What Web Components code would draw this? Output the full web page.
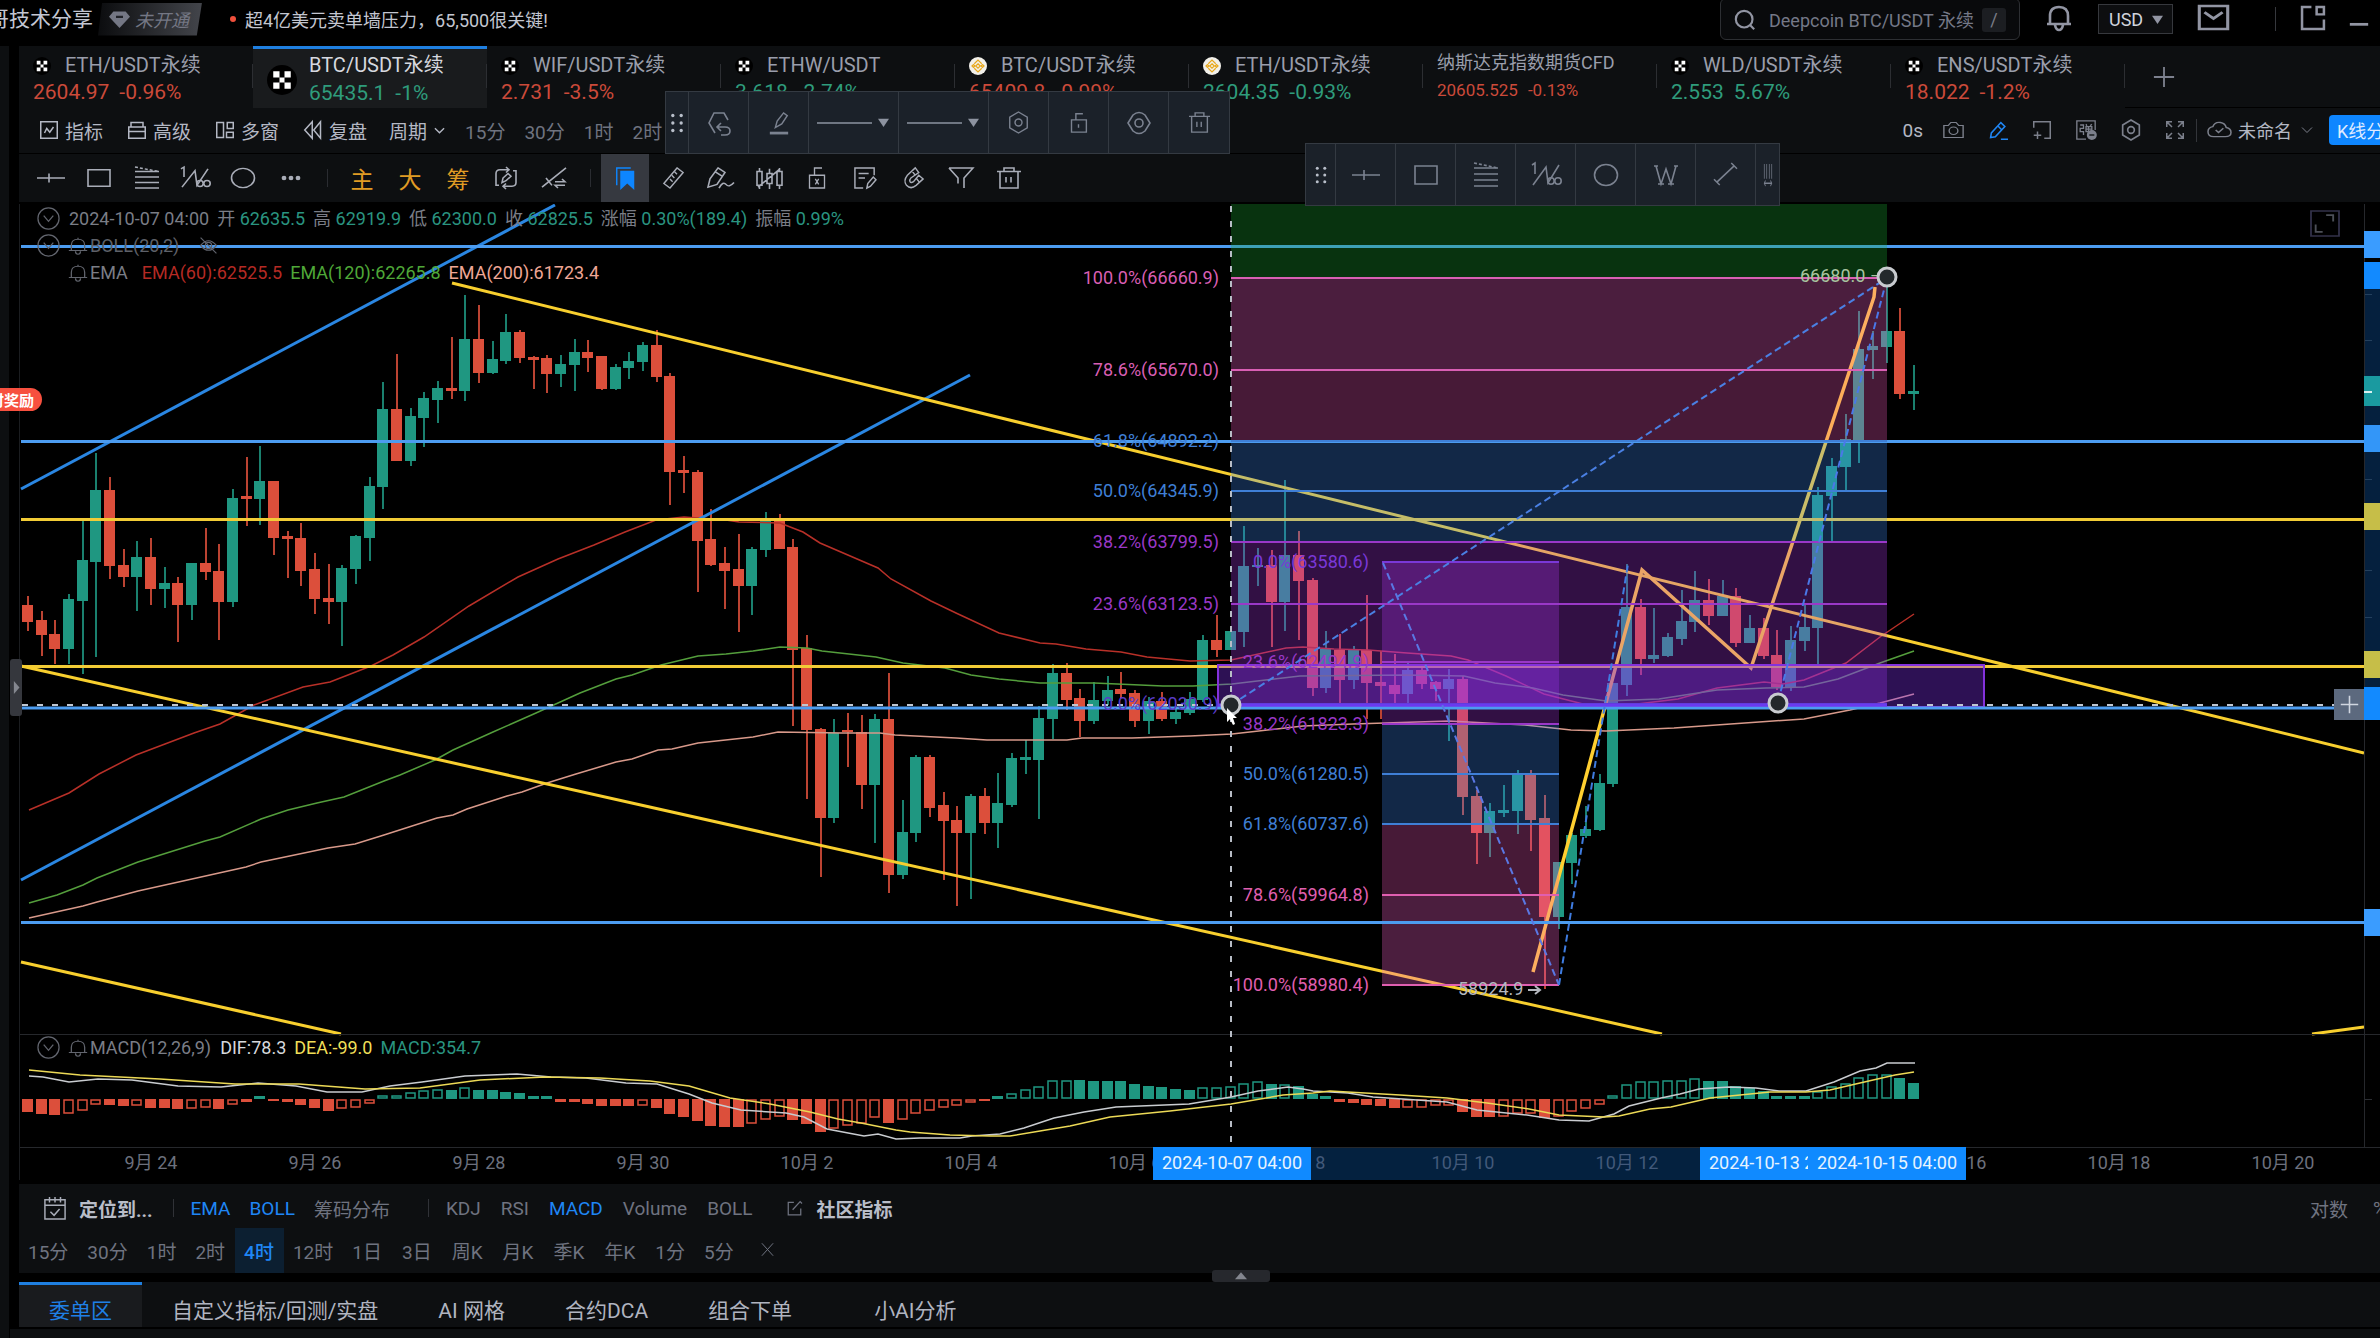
<!DOCTYPE html>
<html lang="zh-CN">
<head>
<meta charset="utf-8">
<title>BTC/USDT永续</title>
<style>
html,body{margin:0;background:#000;height:100%;overflow:hidden}
body{font-family:Roboto,"Noto Sans CJK SC",sans-serif;color:#a6abb8}
</style>
</head>
<body>
<app-shell></app-shell>
<script>
const RESET = `*{box-sizing:border-box}button{font:inherit;color:inherit;background:none;border:0;padding:0;margin:0;cursor:pointer;white-space:nowrap}a{color:inherit;text-decoration:none}`;
function define(name, render) {
  customElements.define(name, class extends HTMLElement {
    constructor() { super(); this.attachShadow({ mode: 'open' }); }
    connectedCallback() {
      const t = document.createElement('template');
      const [css, html] = render(this);
      t.innerHTML = `<style>${RESET}${css}</style>${html}`;
      this.shadowRoot.replaceChildren(t.content.cloneNode(true));
    }
  });
}

/* ---------- icons: 24 x 24 grid, stroked with the current colour ---------- */
const ICONS = {
  cross: '<path d="M-2 12H26M10 7V17"/>',
  rect: '<path d="M1 3H23V21H1Z"/>',
  fan: '<path d="M0 5H24M0 11H24M0 17H24M0 23H24"/><path stroke-dasharray="3 2" d="M0 0L24 5"/>',
  wave: '<path d="M-2 2L1 0V11M-1 22L12 4L14 20L25 2"/><circle cx="17" cy="18" r="3.2"/><circle cx="24" cy="18" r="3.2"/>',
  circle: '<ellipse cx="12" cy="12" rx="11.5" ry="10.5"/>',
  dots: '<g fill="currentColor" stroke="none"><circle cx="5" cy="12" r="2.4"/><circle cx="12" cy="12" r="2.4"/><circle cx="19" cy="12" r="2.4"/></g>',
  cycle: '<path d="M5 20H2V7Q2 3 6 3H15M12 0L15 3L12 6M9 21H18Q22 21 22 17V4H19M12 18L9 21L12 24"/><path d="M8 17L9 12L14 7L17 10L12 15Z"/>',
  swapline: '<path d="M0 22L24 1M4 12L10 20M13 16H23L20 13M23 20H13L16 23"/>',
  bookmark: '<path fill="currentColor" stroke="none" d="M6 4H22V25L14 18L6 25Z"/><path d="M2 20V1H18"/>',
  ruler: '<path d="M16 1L23 6L8 23L1 18Z"/><path d="M13 5L16 8M10 9L13 12M8 13L11 16"/>',
  penwave: '<path d="M9 1L16 6L8 19L-1 22L1 13Z"/><path d="M6 5L13 10M10 23Q14 15 17 19T25 17"/>',
  candles: '<path d="M0 5H5V20H0ZM2.500 1V5M2.500 20V24M10 7H15V18H10ZM12.500 2V7M12.500 18V24M20 5H25V20H20ZM22.500 1V5M22.500 20V24M1 22L23 2"/>',
  lockx: '<path d="M3 9H21V23H3ZM9 9V1H18M10 13L14 19M14 13L10 19"/>',
  note: '<path d="M22 9V1H1V23H10M5 7H16M5 12H12M14 23L15 18L21 11L24 14L18 21Z"/>',
  magnet: '<path d="M14 1L5 9Q0 15 4 20Q9 25 15 20L23 13L18 9L12 16Q9 18 8 16Q7 14 9 12L18 6ZM10 4L14 9M15 12L19 17"/>',
  filter: '<path d="M0 1H24L15 12V23M0 1L9 12V18"/>',
  trash: '<path d="M0 5H24M3 5V23H21V5M7 5V1H17V5M9 11V17M14 11V17"/>',
  indicator: '<path d="M1 1H23V23H1ZM6 16L9 10L13 15L18 8"/>',
  advanced: '<path d="M1 8H23V23H1ZM4 8V2H20V8M1 14H23"/>',
  windows: '<path d="M1 2H10V22H1ZM15 2H23V10H15ZM14 15H23V22H14Z"/>',
  rewind: '<path d="M11 1L1 12L11 23ZM22 1L13 12L22 23Z"/>',
  down: '<path d="M2 7L12 17L22 7"/>',
  chevcircle: '<circle cx="12" cy="12" r="11"/><path d="M7 9L12 15L17 9"/>',
  bell: '<path d="M1 18H23M4 18V11Q4 3 12 3T20 11V18M9 19Q9 23 12 23T15 19M12 1V3"/>',
  topbell: '<path d="M0 19H24M3 19V11Q3 2 12 2T21 11V19M8 20Q9 25 12 25T16 20"/>',
  eyeoff: '<path d="M2 12Q12 0 22 12Q12 24 2 12Z"/><circle cx="12" cy="12" r="4"/><path d="M2 2L22 22"/>',
  eye: '<path d="M1 12L6 4Q12 -1 18 4L23 12L18 20Q12 25 6 20Z"/><circle cx="12" cy="12" r="4"/>',
  camera: '<path d="M1 6H6L9 2H15L18 6H23V22H1Z"/><circle cx="12" cy="13" r="5"/>',
  pencil: '<path d="M2 21L3 15L15 2L20 7L8 20ZM11 6L16 11M15 23H24"/>',
  addbox: '<path d="M1 9V1H23V23H15M1 19H11M6 14V24"/>',
  danmu: '<path d="M23 12V1H1V23H12"/><path d="M5 6H9V10H5V14H9V18M12 5L13 7M19 5L17 7M12 8H19V14H12ZM12 11H19M15 8V20"/><circle cx="19" cy="18" r="6" fill="currentColor" stroke="none"/><path stroke="#0d0f11" d="M16 18H22"/>',
  hex: '<path d="M12 0L22 6V18L12 24L2 18V6Z"/><circle cx="12" cy="12" r="4"/>',
  full: '<path d="M1 8V1H8M1 1L8 8M16 1H23V8M23 1L16 8M1 16V23H8M1 23L8 16M23 16V23H16M23 23L16 16"/>',
  cloud: '<path d="M6 20Q0 20 0 14Q0 9 5 8Q7 2 13 3Q18 4 19 9Q24 10 24 15Q24 20 18 20ZM8 12L11 15L16 10"/>',
  mail: '<path d="M1 1H23V23H1ZM5 7L12 13L19 7"/>',
  popout: '<path d="M10 2H1V23H22V14M15 2H22V9H15Z"/>',
  search: '<circle cx="11" cy="11" r="10"/><path d="M18 18L23 23"/>',
  plus: '<path d="M12 1V23M1 12H23"/>',
  close: '<path d="M3 2L21 22M21 2L3 22"/>',
  minus: '<path d="M2 20H22"/>',
  tri: '<path fill="currentColor" stroke="none" d="M0 4H24L12 22Z"/>',
  triup: '<path fill="currentColor" stroke="none" d="M0 22H24L12 1Z"/>',
  triright: '<path fill="currentColor" stroke="none" d="M5 0V24L20 12Z"/>',
  calendar: '<path d="M1 3H23V24H1ZM1 9H23M6 0V6M12 0V6M18 0V6M7 16L11 20L17 13"/>',
  edit: '<path d="M11 2H2V22H22V12M9 14L21 1L24 4"/>',
  undohex: '<path d="M8 22L2 12L7 2H17L21 9M11 16H18Q23 16 23 20T18 24H14M14 12L10 16L14 20"/>',
  fillpen: '<path d="M8 17L10 10L17 1L21 4L15 13Z"/><path stroke-width="3" d="M2 23H22"/>',
  longline: '<path d="M-10 12H45"/>',
  lock: '<path d="M4 9H21V23H4ZM9 9V2H17M12 14V18"/>',
  wpat: '<path d="M2 3L7 21L12 6L17 21L22 3M0 3H4M20 3H24M4 21H10M14 21H20"/>',
  seg: '<path d="M3 20L21 3M0 17L6 23M18 0L24 6"/>',
  bars: '<path d="M3 0V16M9 0V16M15 0V16M21 0V16M3 21H21M6 18L3 21L6 24M18 18L21 21L18 24"/>',
  grip: '<g fill="#b9bfca" stroke="none"><circle cx="7" cy="3" r="2"/><circle cx="17" cy="3" r="2"/><circle cx="7" cy="12" r="2"/><circle cx="17" cy="12" r="2"/><circle cx="7" cy="21" r="2"/><circle cx="17" cy="21" r="2"/></g>',
  gem: '<path fill="currentColor" stroke="none" d="M5 2H19L24 9L12 24L0 9Z"/><path stroke="#202228" stroke-width="3" d="M8 9H16"/>',
  okx: '<circle cx="12" cy="12" r="12" fill="#000" stroke="none"/><path fill="#fff" stroke="none" d="M5 5H10V10H5ZM14 5H19V10H14ZM10 10H14V14H10ZM5 14H10V19H5ZM14 14H19V19H14Z"/>',
  bnb: '<circle cx="12" cy="12" r="12" fill="#f2f0ea" stroke="none"/><path stroke="#e8a81c" d="M7 9L12 4L17 9M7 15L12 20L17 15M4 12L6 10L8 12L6 14ZM20 12L18 10L16 12L18 14ZM12 9L15 12L12 15L9 12Z"/>',
  expand: '<path stroke="#33324a" d="M0 0H24V24H0Z" stroke-width="1.500"/><path d="M13 4H19V10M4 13V20H10"/>'
};
define('ui-icon', el => {
  const s = el.getAttribute('size') || 24;
  return [`:host{display:inline-flex;flex:none}svg{display:block;overflow:visible}`,
    `<svg width="${s}" height="${el.getAttribute('tall') || s}" preserveAspectRatio="none" viewBox="0 0 24 24" fill="none" stroke="currentColor" stroke-width="${el.getAttribute('w') || 1.6}">${ICONS[el.getAttribute('name')]}</svg>`];
});
const icon = (n, s = 24, w = 1.6, tall = s) => `<ui-icon name="${n}" size="${s}" w="${w}" tall="${tall}"></ui-icon>`;

/* ---------- header ---------- */
define('top-bar', () => [`
:host{display:flex;align-items:center;height:46px;padding-bottom:8px;background:#000}
.name{font-size:21px;line-height:30px;color:#c3c6d2;margin-left:-12px;white-space:nowrap}
.vip{display:flex;align-items:center;gap:5px;height:33px;width:104px;margin-left:5px;padding-left:11px;color:#747784;background:linear-gradient(90deg,#0b0c0e,#43454b);clip-path:polygon(4% 0,100% 0,95% 100%,0 100%);font-size:18px;font-style:italic}
.news{font-size:18px;color:#c3c6d0;display:flex;align-items:center;gap:9px;margin-left:28px}
.news::before{content:"";width:6px;height:6px;border-radius:3px;background:#f0503c}
.right{margin-left:auto;display:flex;align-items:center;color:#9295a3}
.search{display:flex;align-items:center;width:300px;height:42px;border:1px solid #2d2f33;border-radius:6px;background:#090a0c;padding:2px 13px 0 14px;margin-right:27px}
.search input{flex:1;min-width:0;margin-left:14px;background:none;border:0;padding:0;outline:0;font:18px Roboto,"Noto Sans CJK SC",sans-serif;color:#747887}
.search input::placeholder{color:#747887}
kbd{font:18px Roboto,sans-serif;background:#1c1e22;border-radius:3px;width:24px;height:24px;line-height:24px;text-align:center;color:#7a7d88}
.cur{position:relative;margin:0 25px 0 27px}
select{appearance:none;width:75px;height:30px;background:#0d0e10;border:1px solid #36383d;color:#d0d3dc;font:18px Roboto,sans-serif;padding:0 10px;border-radius:0}
.cur ui-icon{position:absolute;right:10px;top:10px;pointer-events:none}
.sep{width:1px;height:24px;background:#36383d;margin:0 25px 0 46px}
.min{margin:0 10px 0 22px}`,
`<span class="name">哥技术分享</span>
<button class="vip">${icon('gem',21,1.6,18)}<span>未开通</span></button>
<a class="news" href="#">超4亿美元卖单墙压力，65,500很关键!</a>
<div class="right">
<label class="search">${icon('search',20,2.6)}<input type="text" aria-label="搜索" placeholder="Deepcoin BTC/USDT 永续"><kbd>/</kbd></label>
<button aria-label="通知">${icon('topbell',24,2.6)}</button>
<label class="cur"><select aria-label="货币"><option>USD</option></select>${icon('tri',11)}</label>
<button aria-label="消息">${icon('mail',31,2.4,25)}</button><i class="sep"></i>
<button aria-label="弹出">${icon('popout',25,2.4)}</button><button class="min" aria-label="最小化">${icon('minus',22,3)}</button></div>`]);

define('market-tab', el => {
  const a = el.hasAttribute('active'), ic = el.getAttribute('icon'), up = el.hasAttribute('up');
  return [`
:host{display:block;width:234px;flex:none;position:relative}
:host::after{content:"";position:absolute;right:0;top:18px;width:1px;height:24px;background:#2c2e32}
button{display:flex;flex-direction:column;align-items:flex-start;text-align:left;width:100%;height:62px;padding:6px 0 0 14px}
.t{display:flex;align-items:center;gap:14px;font-size:20px;line-height:27px;color:#9a9eab}
.p{font-size:21px;line-height:27px;color:${up ? '#2f9c7c' : '#cb4a3a'};display:flex;gap:10px}
:host([active]) button{display:grid;grid-template-columns:30px auto;column-gap:12px;justify-content:start;background:#191b1d;border-top:3px solid #1f7fe0;padding-top:3px}
:host([active]) ui-icon{grid-row:1/3;align-self:center}
:host([active]) .t{color:#d6d8df}
:host([small]) .t{font-size:18px;line-height:22px}:host([small]) .p{font-size:17px;line-height:32px}`,
    `<button>${a ? icon(ic, 30) : ''}<span class="t">${!a && ic ? icon(ic, 18) : ''}<slot></slot></span><span class="p"><span>${el.getAttribute('price')}</span><span>${el.getAttribute('change')}</span></span></button>`];
});
const TABS = [['ETH/USDT永续','2604.97','-0.96%','okx'],['BTC/USDT永续','65435.1','-1%','okx','up active'],['WIF/USDT永续','2.731','-3.5%','okx'],['ETHW/USDT','3.618','-2.74%','okx','up'],['BTC/USDT永续','65409.8','-0.99%','bnb'],['ETH/USDT永续','2604.35','-0.93%','bnb','up'],['纳斯达克指数期货CFD','20605.525','-0.13%','','small'],['WLD/USDT永续','2.553','5.67%','okx','up'],['ENS/USDT永续','18.022','-1.2%','okx']];
define('market-tabs', () => [`
:host{display:flex;height:62px;background:#0d0f11}
.add{flex:1;color:#7c808e;text-align:left;padding-left:28px;border-bottom:1px solid #000;padding-top:4px}`,
  TABS.map(t => `<market-tab price="${t[1]}" change="${t[2]}" icon="${t[3]}" ${t[4] || ''}>${t[0]}</market-tab>`).join('') +
  `<button class="add" aria-label="添加">${icon('plus',22,2)}</button>`]);

define('period-bar', () => [`
:host{display:flex;align-items:center;height:46px;padding-left:21px;background:#0d0f11;font-size:19px;color:#b4b8c4;overflow:hidden;border-bottom:1px solid #000;padding-bottom:1px}
nav{display:flex;gap:25px}nav button,.all,.doc{display:flex;align-items:center;gap:7px}
.all{margin-left:22px}.per{display:flex;gap:19px;margin-left:20px;color:#6f7380}
.right{margin-left:auto;display:flex;align-items:center;color:#7c808c}
.right span.s{color:#b4b8c4;margin-right:20px}
.tools{display:flex;gap:25px;align-items:center}.tools button{display:flex}.on{color:#1f86f5}
.sep{width:1px;height:23px;background:#33353a;margin:0 11px 0 12px}
.doc{font-size:18px;color:#b4b8c4}.doc ui-icon{color:#7c808c}.doc ui-icon:last-child{margin-left:2px}
.k{height:30px;width:51px;margin-left:16px;background:#0e86ff;color:#dfeaff;border-radius:4px 0 0 4px;font-size:18px;padding-left:8px;text-align:left;overflow:hidden}`,
`<nav><button>${icon('indicator',18,2)}指标</button><button>${icon('advanced',18,2)}高级</button><button>${icon('windows',18,2)}多窗</button><button>${icon('rewind',18,2)}复盘</button></nav>
<button class="all">周期${icon('down',11,3)}</button>
<div class="per"><button>15分</button><button>30分</button><button>1时</button><button>2时</button></div>
<div class="right"><span class="s">0s</span><div class="tools"><button aria-label="截图">${icon('camera',21,1.6,18)}</button><button class="on" aria-label="画线">${icon('pencil',19,2)}</button><button aria-label="新增">${icon('addbox',18,2)}</button><button aria-label="弹幕">${icon('danmu',20,1.6)}</button><button aria-label="设置">${icon('hex',20,2)}</button><button aria-label="全屏">${icon('full',18,2)}</button></div>
<i class="sep"></i><button class="doc">${icon('cloud',23,1.6,20)}未命名${icon('down',12,2)}</button><button class="k">K线分</button></div>`]);

const DRAW = [['cross','十字'],['rect','矩形'],['fan','扇形'],['wave','波浪'],['circle','圆'],['dots','更多'],0,['主'],['大'],['筹'],['cycle','循环'],['swapline','切换'],0,['bookmark','收藏'],['ruler','测量'],['penwave','画笔'],['candles','K线'],['lockx','锁定'],['note','备注'],['magnet','磁吸'],['filter','筛选'],['trash','删除']];
const NARROW = { ruler: 21, magnet: 21, bookmark: 21, lockx: 20, note: 22 };
define('draw-bar', () => [`
:host{display:flex;align-items:center;height:50px;padding-left:8px;background:#0d0f11;color:#a9adb8;border-bottom:2px solid #000}
button{width:48px;height:48px;display:flex;align-items:center;justify-content:center;font-size:23px}
.t{color:#e09c24}.a{background:#363940;color:#0d86ff}
i{width:1px;height:18px;margin:0 10px 0 12px;background:#2a2c31}`,
  DRAW.map(d => !d ? '<i></i>' : d[1] ? `<button aria-label="${d[1]}" class="${d[0] === 'bookmark' ? 'a' : ''}">${icon(d[0], NARROW[d[0]] || 24, 1.6, 22)}</button>` : `<button class="t">${d[0]}</button>`).join('')]);

define('float-bar', el => {
  const cells = el.getAttribute('tools').split(' ').map(c => {
    const [n, s = '60', z = '20', t = z] = c.split(':');
    return `<button aria-label="${n}" style="width:${s}px">${icon(n, +z, 1.6, +t)}${n === 'longline' ? icon('tri', 11) : ''}</button>`;
  }).join('');
  return [`
:host{display:flex;position:absolute;height:63px;border:1px solid #343a42;background:#1b2129;color:#7b8290}
button{display:flex;align-items:center;justify-content:center;border-right:1px solid #343a42}
button:last-child{border-right:0}
button ui-icon+ui-icon{margin-left:27px}
button[aria-label=longline]{justify-content:flex-start;padding-left:18px;color:#8d93a0}`, cells];
});

/* ---------- chart ---------- */
const X0 = 28, STEP = 13.667;
const cx = i => Math.round(X0 + STEP * i);
/* colour, high, body top, body bottom, low */
const BARS = `r596,605,622,631 r611,620,635,656 r620,634,649,664 g594,599,649,664 g521,560,601,674 g453,490,562,657 r477,490,566,579 r549,565,577,587 g541,557,577,611 r538,557,589,605 g567,583,589,608 r577,583,605,642 g563,563,605,620 r528,563,572,580 r544,571,602,640 g489,498,602,607 r457,496,499,526 g446,481,499,525 r481,481,538,555 r531,536,539,578 r523,538,571,586 r553,569,599,614 r564,598,602,624 g565,568,602,646 g535,536,569,584 g477,486,538,561 g382,409,487,509 r354,409,461,461 g408,416,461,466 g392,398,418,447 g381,388,400,423 r337,388,391,399 g295,339,391,401 r305,339,373,383 g341,359,373,374 g314,332,361,364 r330,332,358,363 r356,357,360,389 r355,358,374,393 g355,364,374,387 g339,352,365,391 r340,352,358,372 r356,356,389,390 g364,367,389,390 g352,361,368,379 g342,345,362,371 r330,345,377,382 r373,376,472,505 r456,470,473,493 r470,472,541,592 r509,539,565,566 r547,563,571,609 r534,569,586,632 g547,549,586,615 g512,521,550,557 r514,521,549,549 r539,547,650,726 r635,648,730,799 r728,729,818,877 g719,733,818,823 r713,730,732,767 r715,732,785,809 g714,719,785,843 r673,719,875,893 g800,832,875,879 g755,757,833,842 r755,757,808,817 r792,805,821,880 r806,820,833,906 g794,796,833,899 r788,796,823,834 g773,803,823,848 g753,758,805,807 g740,757,760,774 g706,718,760,819 g664,673,719,739 r663,673,700,710 r689,698,721,737 g682,700,721,724 g676,690,701,705 r672,689,694,698 r690,693,721,727 g697,701,721,734 r692,701,719,721 g707,712,719,724 g692,699,713,715 g635,640,700,702 r615,640,650,657 g631,631,650,650 g526,566,632,647 g548,565,567,586 r550,565,602,647 g480,555,602,631 r531,555,581,640 r578,580,688,696 g631,649,688,693 r634,650,680,705 g646,650,680,689 r595,650,683,719 r651,682,686,719 r654,685,694,705 g662,670,694,705 r664,670,684,689 r681,682,689,701 g669,679,689,741 r676,679,797,815 r790,796,833,864 g803,811,833,857 g785,810,813,817 g770,775,811,834 r770,775,820,851 r795,818,917,989 g862,862,917,929 g833,835,863,884 g806,829,836,838 g774,783,830,831 g683,683,784,787 g564,607,685,696 r599,607,659,675 g608,655,659,663 g633,637,656,657 g590,621,639,645 g571,600,622,632 r579,600,616,625 g580,596,616,616 r588,596,643,647 g615,628,643,643 r618,628,656,659 r630,655,687,690 g626,640,688,691 g603,627,641,651 g487,495,628,664 g458,466,496,543 g414,439,467,491 g311,349,441,463 g331,346,350,379 g280,331,347,363 r308,331,394,399 g365,391,394,410`.split(' ');
/* signed height, h = hollow */
const HIST = `-13 -15 -16 -15h -12h -6h -6 -7 -7h -9 -9 -10 -10h -9h -10 -6h -3 3 -2 -3 -6 -9 -12 -10h -9h -5h 4h 4h 7h 9h 10h 9 12h 9 9 7 6 3 3 -3 -3 -5 -7 -7 -7 -7h -9 -15 -18 -22 -27 -28 -28 -25h -21h -18h -21 -25 -33 -30h -27h -25h -19h -24 -21h -15h -12h -9h -7h -4h -2 3 6h 10h 13h 19h 19h 19 18 18 18 15 13 12 10 9 12h 12h 13h 16h 18h 15 15h 13 5 3 -3 -4 -6 -7 -9 -9h -9h -7h -7h -13 -18 -18 -18h -15h -15h -19 -18h -13h -10h -6h 4h 15h 18h 18h 19h 19h 21h 18 18 13 11 8 3 3 3 8h 13h 16h 22h 25h 25h 21 16`.split(' ');
const RED = '#dc4f3b', TEAL = '#1f9781';
const EMA60 = '29,810 69,793 99,774 136,755 165,744 194,733 220,724 254,705 303,687 330,682 371,666 393,655 424,637 469,606 518,577 558,559 594,545 625,532 656,520 684,517 726,520 739,522 780,523 803,532 820,543 878,568 891,579 931,601 956,613 999,633 1040,643 1056,644 1086,649 1121,652 1147,657 1190,661 1231,660 1286,648 1303,647 1334,649 1368,650 1407,653 1451,656 1468,660 1506,676 1544,694 1583,704 1629,705 1678,699 1717,688 1764,682 1783,684 1804,680 1846,663 1880,637 1914,614';
const EMA120 = '29,903 57,895 83,885 97,878 138,862 205,841 220,837 261,819 288,810 317,803 344,797 384,781 400,775 435,760 453,750 493,732 536,713 580,693 616,679 632,675 661,665 698,656 726,654 753,651 780,647 807,648 822,651 876,657 903,663 945,668 971,675 999,679 1040,683 1094,683 1163,686 1193,686 1232,684 1300,676 1407,675 1464,676 1495,683 1533,688 1563,695 1606,701 1659,699 1717,690 1766,688 1804,687 1838,679 1880,663 1914,651';
const EMA200 = '29,918 83,906 97,902 138,891 219,873 246,867 261,862 328,848 355,844 384,835 437,818 453,815 467,809 507,796 522,792 547,783 576,774 616,762 632,759 658,750 672,749 698,743 753,737 778,732 841,733 880,733 895,735 956,738 987,740 1067,740 1082,738 1132,738 1190,736 1232,734 1303,726 1353,724 1449,721 1525,725 1571,730 1606,731 1674,728 1759,722 1804,719 1850,710 1880,703 1914,694';
const DIF = '29,1076 43,1077 69,1082 98,1079 132,1080 178,1086 221,1087 258,1083 296,1086 327,1092 362,1092 390,1086 422,1082 465,1076 517,1074 551,1077 586,1078 626,1083 657,1084 689,1094 712,1103 741,1110 786,1113 804,1117 827,1129 864,1136 878,1134 896,1139 920,1138 960,1138 972,1136 1000,1134 1024,1128 1054,1118 1084,1112 1116,1107 1189,1104 1231,1097 1258,1091 1288,1087 1303,1089 1313,1091 1348,1093 1373,1097 1417,1100 1447,1102 1477,1110 1527,1115 1559,1120 1589,1121 1614,1114 1629,1106 1661,1098 1680,1094 1699,1089 1729,1087 1756,1088 1779,1091 1806,1091 1834,1082 1860,1071 1876,1068 1887,1063 1915,1063';
const DEA = '29,1070 80,1075 160,1079 235,1084 299,1084 365,1089 420,1088 480,1080 545,1077 600,1078 650,1081 689,1086 730,1098 770,1104 810,1112 838,1119 861,1123 896,1130 910,1132 950,1135 990,1136 1010,1136 1040,1131 1070,1126 1110,1117 1170,1111 1231,1104 1283,1095 1313,1093 1330,1091 1400,1095 1447,1098 1487,1103 1529,1109 1559,1115 1604,1117 1619,1116 1650,1109 1671,1107 1710,1098 1770,1092 1806,1092 1830,1090 1860,1083 1895,1075 1914,1072';
const FIB1 = [['100.0%(66660.9)',278,'#d95fb4'],['78.6%(65670.0)',370,'#d95fb4'],['61.8%(64892.2)',441,'#3f7fd6'],['50.0%(64345.9)',491,'#3f7fd6'],['38.2%(63799.5)',542,'#9a38c8'],['23.6%(63123.5)',604,'#9a38c8'],['0.0%(62030.9)',704,'#5a3cc8']];
const FIB2 = [['0.0%(63580.6)',562,'#7a38d8'],['23.6%(62494.9)',662,'#9a38c8'],['38.2%(61823.3)',724,'#9a38c8'],['50.0%(61280.5)',774,'#3f7fd6'],['61.8%(60737.6)',824,'#3f7fd6'],['78.6%(59964.8)',895,'#e05fb0'],['100.0%(58980.4)',985,'#e05fb0']];
const rect = (x, y, w, h, f, o = '') => `<rect x="${x}" y="${y}" width="${w}" height="${h}" fill="${f}" ${o}/>`;
const line = (x1, y1, x2, y2, c, w = 3, o = '') => `<path d="M${x1} ${y1}L${x2} ${y2}" stroke="${c}" stroke-width="${w}" ${o}/>`;
const poly = (p, c, w = 1.5) => `<polyline points="${p}" fill="none" stroke="${c}" stroke-width="${w}"/>`;
const text = (x, y, s, c, a = 'start') => `<text x="${x}" y="${y + 6}" fill="${c}" text-anchor="${a}">${s}</text>`;
const fib = (list, x1, x2, tx) => list.map(l => line(x1, l[1], x2, l[1], l[2], 2) + text(tx, l[1], l[0], l[2], 'end')).join('');
const PINK = 'rgba(250,100,205,.3)', PINK2 = 'rgba(245,88,190,.29)', BLUE = 'rgba(64,143,255,.28)', PURPLE = 'rgba(178,57,246,.28)';

function plot() {
  let s = '';
  BARS.forEach((b, i) => {
    const c = b[0] === 'r' ? RED : TEAL, [h, t, m, l] = b.slice(1).split(',').map(Number), x = cx(i);
    s += rect(x - 1, h, 2, l - h, c, 'opacity=".85"') + rect(x - 6, t, 11, Math.max(2, m - t), c);
  });
  s += poly(EMA60, '#b83028') + poly(EMA120, '#549e3c') + poly(EMA200, '#d8998a');
  s += line(21, 489, 555, 205, '#2a86e2') + line(21, 880, 970, 375, '#2a86e2');
  s += line(21, 519.5, 2364, 519.5, '#f2cc36') + line(21, 666.5, 2364, 666.5, '#f2cc36');
  s += line(452, 283, 2364, 753, '#f8cf2e') + line(21, 666, 1662, 1034, '#f8cf2e') + line(21, 962, 341, 1034, '#f8cf2e') + line(2312, 1034, 2364, 1027, '#f8cf2e');
  s += `<polyline points="1533,972 1642,570 1751,668 1874,297 1875,287" fill="none" stroke="#ffcf30" stroke-width="3.5"/>`;
  s += line(21, 246.5, 2364, 246.5, '#4c9cf0');
  s += line(22, 705, 1218, 705, '#c0c6d0', 2, 'stroke-dasharray="6 9"');
  s += rect(1231, 204, 656, 74, 'rgba(27,170,50,.3)') + rect(1231, 278, 656, 92, PINK) + rect(1231, 370, 656, 71, PINK2) + rect(1231, 441, 656, 101, BLUE) + rect(1231, 542, 656, 164, PURPLE);
  s += rect(1382, 562, 177, 162, PURPLE) + rect(1382, 724, 177, 100, BLUE) + rect(1382, 824, 177, 71, PINK2) + rect(1382, 895, 177, 90, PINK);
  s += rect(1218, 665, 766, 42, 'rgba(130,50,240,.35)', 'stroke="#8431dc" stroke-width="2"');
  s += line(21, 441.5, 2364, 441.5, '#4c9cf0') + line(21, 708, 2364, 708, '#4c9cf0') + line(21, 922.5, 2364, 922.5, '#4c9cf0');
  s += fib(FIB1, 1231, 1887, 1219) + fib(FIB2, 1382, 1559, 1369);
  s += line(1218, 705, 1887, 705, '#6a3af0', 3);
  s += line(1897, 705, 2334, 705, '#c0c6d0', 2, 'stroke-dasharray="6 9"');
  const d = 'stroke-dasharray="7 4"';
  s += line(1231, 705, 1887, 278, '#4a80e4', 2, d) + line(1383, 563, 1559, 985, '#5a78e4', 2, d) + line(1559, 985, 1628, 564, '#3f7ce0', 2, d) + line(1778, 702, 1887, 278, '#4a78e8', 2, d);
  s += text(1800, 276, '66680.0 –', '#a8c4a0') + text(1458, 989, '58924.9', '#b4b7be') + line(1528, 990, 1540, 990, '#b4b7be', 2) + '<path d="M1535 986L1540 990L1535 994" fill="none" stroke="#b4b7be" stroke-width="2"/>';
  /* lower pane */
  s += rect(19, 1034, 2361, 1, '#26282c') + rect(19, 1147, 2361, 1, '#26282c');
  HIST.forEach((v, i) => {
    const n = parseInt(v), c = n < 0 ? RED : TEAL, h = Math.abs(n), x = cx(i) - 6, y = n < 0 ? 1099 : 1099 - h;
    s += v.endsWith('h') ? rect(x + 1, y + 1, 9, Math.max(1, h - 2), 'none', `stroke="${c}" stroke-width="1.500"`) : rect(x, y, 11, h, c);
  });
  s += poly(DIF, '#c9ccd0') + poly(DEA, '#ecd956');
  s += line(1231, 206, 1231, 1147, '#b8bdc6', 2, 'stroke-dasharray="6 9"');
  [[1231, 705], [1887, 277], [1778, 703]].forEach(p => s += `<circle cx="${p[0]}" cy="${p[1]}" r="9" fill="#23282b" stroke="#c8cbcf" stroke-width="3"/>`);
  s += '<path d="M1227 708V722L1230 719L1233 725L1235 724L1233 718H1237Z" fill="#fff"/>';
  /* time scale */
  s += rect(1311, 1148, 389, 32, '#04213f');
  ['9月 24', '9月 26', '9月 28', '9月 30', '10月 2', '10月 4', '10月 6', '10月 8', '10月 10', '10月 12', '', '10月 16', '10月 18', '10月 20'].forEach((t, i) => { if (t) s += text(151 + 164 * i, 1163, t, i > 6 && i < 10 ? '#42597a' : '#6c707d', 'middle'); });
  [[1153, '2024-10-07 04:00'], [1700, '2024-10-13 20:00'], [1808, '2024-10-15 04:00']].forEach(b => s += rect(b[0], 1147, 158, 33, '#108aff') + text(b[0] + 79, 1163, b[1], '#e6f3ff', 'middle'));
  return s;
}
function scale() {
  let s = rect(2364, 204, 1, 943, '#26282c') + rect(2365, 289, 15, 398, '#05203e') + rect(2364, 1147, 16, 1, '#26282c') + rect(2364, 1034, 16, 1, '#26282c');
  [[231, 27, '#3a9cff'], [262, 27, '#128aff'], [376, 30, '#1a9aa0'], [425, 27, '#3396f8'], [503, 27, '#c6be48'], [651, 27, '#c6be48'], [687, 33, '#128aff'], [909, 27, '#3a9cff']].forEach(b => s += rect(2364, b[0], 16, b[1], b[2]));
  [294, 340, 479, 570, 617].forEach(y => s += rect(2365, y, 7, 1, '#24405e'));
  return s + rect(2364, 391, 8, 2, '#d8f0f0') + rect(2365, 1099, 7, 1, '#2c2e33');
}
define('k-chart', () => [`
:host{display:flex;position:relative;height:976px;background:#000;overflow:hidden}
.plot{flex:1;min-width:0;height:100%;display:block;border-left:1px solid #1b1d20}
.scale{width:16px;height:100%;flex:none}
text{font:18px Roboto,"Noto Sans CJK SC",sans-serif}
chart-legend{position:absolute;left:18px}
.full{position:absolute;right:41px;top:7px;color:#4c4f57}
.order{position:absolute;right:16px;top:485px;width:30px;height:31px;background:#5c697e;color:#d0d6e0;display:flex;align-items:center;justify-content:center}`,
`<svg class="plot" viewBox="20 204 2344 976" preserveAspectRatio="xMinYMin slice">${plot()}</svg>
<svg class="scale" viewBox="2364 204 16 976" preserveAspectRatio="xMinYMin slice">${scale()}</svg>
<chart-legend style="top:1px"></chart-legend><chart-legend kind="macd" style="top:830px"></chart-legend>
<button class="full" aria-label="展开">${icon('expand',28,1.6,25)}</button><button class="order" aria-label="下单">${icon('plus',19,2)}</button>`]);

define('chart-legend', el => {
  const v = (k, n) => `<span>${k} <b>${n}</b></span>`, bell = icon('bell', 20, 1.5, 18), chev = icon('chevcircle', 23, 1.3);
  const main = `<div>${chev}<p class="o"><span>2024-10-07 04:00</span>${v('开','62635.5')}${v('高','62919.9')}${v('低','62300.0')}${v('收','62825.5')}${v('涨幅','0.30%(189.4)')}${v('振幅','0.99%')}</p></div>
<div class="dim">${chev}<p class="n">${bell}BOLL(20,2)</p>${icon('eyeoff',19,1.5)}</div>
<div><i></i><p class="n">${bell}EMA</p><p class="v"><span style="color:#b52a24">EMA(60):62525.5</span><span style="color:#4fa838">EMA(120):62265.8</span><span style="color:#f0a796">EMA(200):61723.4</span></p></div>`;
  const macd = `<div>${chev}<p class="n">${bell}MACD(12,26,9)</p><p class="v near"><span style="color:#d6d8dc">DIF:78.3</span><span style="color:#f0df58">DEA:-99.0</span><span style="color:#2a9480">MACD:354.7</span></p></div>`;
  return [`
:host{display:block;font-size:18px;line-height:27px;color:#7a7d86;white-space:nowrap}
div{display:flex;align-items:center;height:27px}p{display:flex;margin:0}
ui-icon{color:#62656e}b{font-weight:400;color:#2a9480}
.o{gap:8px;margin-left:9px}.n{gap:2px;align-items:center;margin-left:8px}i{width:23px}
.v{gap:8px;margin-left:14px}.near{margin-left:9px}.dim{color:#5e6169}.dim>ui-icon:last-child{margin-left:20px}`,
    el.getAttribute('kind') === 'macd' ? macd : main];
});

define('indicator-panel', () => [`
:host{display:block;height:89px;background:#0d0f11;font-size:19px;color:#6f7380;position:relative}
.r1,.r2{display:flex;align-items:center}.r1{height:44px;padding:4px 0 0 25px;overflow:hidden}
.r2{height:45px}.r2 button{height:45px;padding:0 10px 0 9px}.r2 .a{background:#0c1f31;color:#1f86f5;font-weight:500}
.g{display:flex;gap:19px}.wide{gap:20px}.on{color:#1f86f5}
.loc,.com{display:flex;align-items:center;font-weight:700;color:#b9bdc8;gap:13px}.loc ui-icon{color:#a9adb8}.com ui-icon{color:#6f7380}
.r1 i{width:1px;height:18px;background:#303237;margin:0 17px 0 20px}.r1 .g+i{margin-left:38px}
.com{margin-left:34px;gap:15px}.end{margin-left:auto;display:flex;gap:25px;margin-right:-7px}
.r2 .x{padding:0 0 0 16px}
.r2 .l{padding-right:11px}
.fold{position:absolute;left:1193px;top:86px;width:58px;height:12px;border-radius:3px;background:#26282d;color:#83868f;display:flex;align-items:center;justify-content:center;z-index:1}`,
`<div class="r1"><button class="loc">${icon('calendar',22,1.6)}定位到...</button><i></i>
<div class="g"><button class="on">EMA</button><button class="on">BOLL</button><button>筹码分布</button></div><i></i>
<div class="g wide"><button>KDJ</button><button>RSI</button><button class="on">MACD</button><button>Volume</button><button>BOLL</button></div>
<button class="com">${icon('edit',15,2)}社区指标</button><div class="end"><button>对数</button><button>%</button></div></div>
<div class="r2">${'15分 30分 1时 2时 4时 12时 1日 3日 周K 月K 季K 年K 1分 5分'.split(' ').map(t => `<button class="${t === '4时' ? 'a' : /日|K/.test(t) ? 'l' : ''}">${t}</button>`).join('')}<button class="x" aria-label="关闭">${icon('close',15,1.6)}</button></div>
<button class="fold" aria-label="折叠">${icon('triup',12,1,8)}</button>`]);

define('bottom-tabs', () => [`
:host{display:flex;height:45px;background:#0d0f11;font-size:21px;color:#b0b4c0}
button{padding:8px 30px 0 30px}.a{background:#191b1e;color:#1f80e6;border-top:3px solid #1f7fe0;padding:5px 30px 0}.last{margin-left:22px}`,
'<button class="a">委单区</button><button>自定义指标/回测/实盘</button><button>AI 网格</button><button>合约DCA</button><button>组合下单</button><button class="last">小AI分析</button>']);

define('side-rail', () => [`
:host{display:block;width:9px;flex:none;background:#0d0f11;position:relative;z-index:2}
.gift{position:absolute;right:-33px;top:342px;height:23px;width:62px;border-radius:12px;background:#f7503f;color:#fff;font-size:15px;font-weight:700;text-align:right;padding-right:8px}
.open{position:absolute;left:10px;top:613px;width:12px;height:57px;border-radius:3px;background:#35373d;color:#84878f;display:flex;align-items:center;justify-content:center}`,
`<button class="gift">时奖励</button><button class="open" aria-label="展开">${icon('triright',9,1,13)}</button>`]);

define('app-shell', () => [`
:host{display:flex;flex-direction:column;min-height:100vh;position:relative;overflow:hidden}
.row{display:flex;flex:1}main{flex:1;min-width:0;margin-left:10px;display:flex;flex-direction:column}
indicator-panel{margin:4px 0 9px}.foot{flex:1;min-height:9px;margin:2px 0 0 -9px;background:#0d0f11}
.f1{left:665px;top:91px}.f2{left:1305px;top:143px}`,
`<top-bar></top-bar><div class="row"><side-rail></side-rail><main>
<market-tabs></market-tabs><period-bar></period-bar><draw-bar></draw-bar><k-chart></k-chart>
<indicator-panel></indicator-panel><bottom-tabs></bottom-tabs><div class="foot"></div></main></div>
<float-bar class="f1" tools="grip:23:20 undohex:60:24 fillpen:60:22 longline:90:24 longline:90:24 hex:60:21 lock:60:21 eye:60:24 trash:60:21"></float-bar>
<float-bar class="f2" tools="grip:30:18 cross:60:24 rect:60:24 fan:60:24 wave:60:24 circle:60:24 wpat:60:24 seg:60:23 bars:23:10:22"></float-bar>`]);
</script>
</body>
</html>
